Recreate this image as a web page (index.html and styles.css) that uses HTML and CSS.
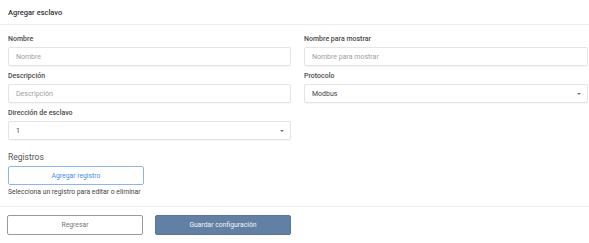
FILE: index.html
```html
<!DOCTYPE html>
<html lang="es">
<head>
<meta charset="utf-8">
<link rel="stylesheet" href="styles.css">
</head>
<body>
<div class="panel">
  <div class="header">Agregar esclavo</div>
  <div class="form">
    <div class="grid">
      <div class="field">
        <label class="label">Nombre</label>
        <div class="input placeholder">Nombre</div>
      </div>
      <div class="field">
        <label class="label">Nombre para mostrar</label>
        <div class="input placeholder">Nombre para mostrar</div>
      </div>
      <div class="field">
        <label class="label">Descripción</label>
        <div class="input placeholder">Descripción</div>
      </div>
      <div class="field">
        <label class="label">Protocolo</label>
        <div class="input select"><span>Modbus</span><span class="caret"></span></div>
      </div>
      <div class="field">
        <label class="label">Dirección de esclavo</label>
        <div class="input select"><span>1</span><span class="caret"></span></div>
      </div>
    </div>
    <div class="registros">
      <div class="reg-title">Registros</div>
      <button class="btn btn-outline">Agregar registro</button>
      <div class="hint">Selecciona un registro para editar o eliminar</div>
    </div>
  </div>
  <div class="footer">
    <button class="btn btn-back">Regresar</button>
    <button class="btn btn-primary">Guardar configuración</button>
  </div>
</div>
</body>
</html>
```

FILE: styles.css
```css
* { box-sizing: border-box; }
html, body { margin: 0; padding: 0; background: #fff; }
body {
  font-family: Roboto, "Liberation Sans", Arial, sans-serif;
  color: #333;
  width: 589px;
  height: 243px;
  overflow: hidden;
}
.panel { width: 589px; }
.header {
  height: 25px;
  padding: 0 8px;
  display: flex;
  align-items: center;
  font-size: 7.5px;
  font-weight: 500;
  color: #333;
  border-bottom: 1px solid #ececec;
}
.form { padding: 6px 1px 0 8px; }
.grid {
  display: grid;
  grid-template-columns: 283px 284px;
  column-gap: 13px;
  row-gap: 2px;
}
.field { display: flex; flex-direction: column; }
.label {
  height: 16px;
  line-height: 16px;
  font-size: 7px;
  font-weight: 500;
  color: #4a4a4a;
}
.input {
  height: 19px;
  border: 1px solid #e4e4e4;
  border-radius: 2px;
  box-shadow: 0 1px 1px rgba(0,0,0,0.04);
  padding: 0 7px;
  display: flex;
  align-items: center;
  font-size: 7px;
  color: #444;
}
.placeholder { color: #a0a0a0; }
.select { justify-content: space-between; }
.caret {
  width: 0; height: 0;
  border-left: 2px solid transparent;
  border-right: 2px solid transparent;
  border-top: 2.5px solid #777;
  margin-right: -1px;
}
.registros { padding-top: 10px; }
.reg-title {
  font-size: 8.5px;
  color: #555;
  line-height: 14px;
  height: 16px;
}
.btn {
  font-family: inherit;
  width: 136px;
  height: 20px;
  border-radius: 2px;
  font-size: 6.8px;
  padding: 0;
  cursor: pointer;
}
.btn-outline {
  display: block;
  height: 19px;
  background: #fff;
  border: 1px solid #8db6ef;
  color: #4a8ee6;
}
.hint {
  font-size: 6.8px;
  color: #444;
  line-height: 14px;
}
.footer {
  margin-top: 7px;
  border-top: 1px solid #ececec;
  padding: 8px 0 0 7px;
  display: flex;
  gap: 12px;
}
.btn-back {
  background: #fff;
  border: 1px solid #9a9a9a;
  color: #777;
}
.btn-primary {
  background: #6180a4;
  border: 1px solid #5a7699;
  color: #f2f4f8;
}
```
